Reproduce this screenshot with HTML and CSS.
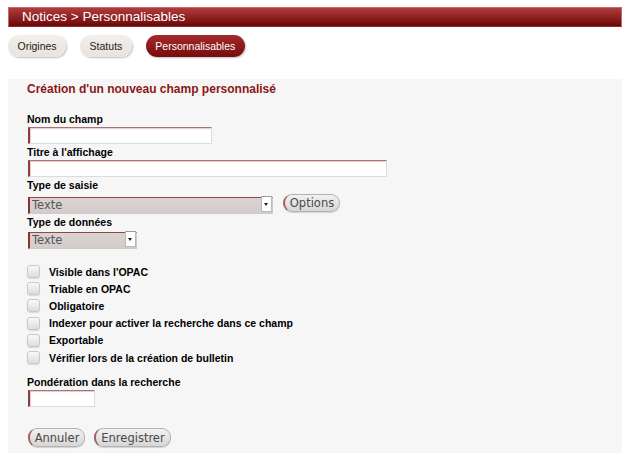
FILE: index.html
```html
<!DOCTYPE html>
<html lang="fr">
<head>
<meta charset="utf-8">
<title>Notices &gt; Personnalisables</title>
<link rel="stylesheet" href="styles.css">
</head>
<body>
<h1 class="hdr">Notices &gt; Personnalisables</h1>
<nav class="tabs">
  <a class="tab">Origines</a>
  <a class="tab">Statuts</a>
  <a class="tab active">Personnalisables</a>
</nav>
<form class="panel">
  <h2 class="title">Création d'un nouveau champ personnalisé</h2>
  <label class="lbl lbl-first">Nom du champ</label>
  <input class="txt w-name" type="text">
  <label class="lbl">Titre à l'affichage</label>
  <input class="txt w-title" type="text">
  <label class="lbl">Type de saisie</label>
  <div class="row">
    <span class="sel w-saisie"><select><option>Texte</option></select><span class="arrow"></span></span>
    <button type="button" class="btn btn-opt">Options</button>
  </div>
  <label class="lbl lbl-donnees">Type de données</label>
  <span class="sel w-donnees"><select><option>Texte</option></select><span class="arrow"></span></span>
  <ul class="checks">
    <li><span class="cb"></span>Visible dans l'OPAC</li>
    <li><span class="cb"></span>Triable en OPAC</li>
    <li><span class="cb"></span>Obligatoire</li>
    <li><span class="cb"></span>Indexer pour activer la recherche dans ce champ</li>
    <li><span class="cb"></span>Exportable</li>
    <li><span class="cb"></span>Vérifier lors de la création de bulletin</li>
  </ul>
  <label class="lbl lbl-pond">Pondération dans la recherche</label>
  <input class="txt w-pond" type="text">
  <div class="actions">
    <button type="button" class="btn">Annuler</button>
    <button type="button" class="btn">Enregistrer</button>
  </div>
</form>
</body>
</html>
```
FILE: styles.css
```css
html, body { margin: 0; padding: 0; background: #fff; }
body {
  padding: 7px 8px 0 8px;
  font-family: "Liberation Sans", Arial, sans-serif;
  color: #000;
}
.hdr {
  margin: 0;
  height: 20px;
  box-sizing: border-box;
  background: linear-gradient(#b13c3c, #6c0808);
  border: 1px solid #c46a6a;
  border-bottom-color: #8a2a2a;
  color: #fff;
  font-size: 13.5px;
  font-weight: normal;
  line-height: 18px;
  padding-left: 13px;
}
.tabs {
  display: flex;
  gap: 14px;
  margin-top: 8px;
  height: 23px;
}
.tab {
  display: block;
  height: 22px;
  line-height: 22px;
  padding: 0 9.5px;
  border-radius: 11px;
  background: linear-gradient(#f3efea, #e9e3dc);
  box-shadow: 1px 1px 2px rgba(0,0,0,0.25);
  font-size: 10.5px;
  color: #222;
}
.tab.active {
  background: linear-gradient(#a52a2a, #760c0c);
  color: #fff;
  padding: 0 9.5px;
}
.panel {
  display: flex;
  flex-direction: column;
  align-items: flex-start;
  margin-top: 21px;
  background: #f6f6f6;
  padding: 3px 0 6px 19px;
  height: 374px;
  box-sizing: border-box;
}
.title {
  margin: 0;
  font-size: 12px;
  line-height: 15px;
  color: #8b1616;
  font-weight: bold;
}
.lbl {
  display: block;
  font-size: 10.5px;
  font-weight: bold;
  line-height: 13px;
  margin-top: 2px;
}
.lbl-first { margin-top: 16px; }
.lbl-donnees { margin-top: 4px; }
.txt {
  margin: 1px 0 0 1px;
  height: 18px;
  box-sizing: border-box;
  background: #fff;
  border: 1px solid #dcdcdc;
  border-top: 1px solid #b07070;
  border-left: 2px solid #8f3c3c;
  box-shadow: inset 1px 1px 1px rgba(140,50,50,0.25);
  padding: 0;
}
.w-name { width: 184px; }
.w-title { width: 359px; }
.w-pond { width: 67px; }
.row {
  display: flex;
  align-items: center;
  gap: 10px;
  margin-top: 2px;
  margin-left: 1px;
}
.sel {
  position: relative;
  display: block;
  height: 17px;
}
.w-donnees { margin: 1px 0 0 1px; }
.sel select {
  -webkit-appearance: none;
  appearance: none;
  width: 100%;
  height: 17px;
  margin: 0;
  box-sizing: border-box;
  border: 1px solid #cfcaca;
  border-top: 1px solid #9a4444;
  border-left: 2px solid #8f3030;
  background: linear-gradient(#d9d3d1, #d2cccb);
  font-family: "DejaVu Sans", Verdana, sans-serif;
  font-size: 11.5px;
  color: #555;
  padding: 0 0 0 2px;
  line-height: 15px;
  border-radius: 0;
}
.w-saisie { width: 245px; }
.w-donnees { width: 109px; }
.arrow {
  position: absolute;
  right: 1px;
  top: 1px;
  width: 9px;
  height: 14px;
  background: #fff;
  border: 1px solid #b9b9b9;
  border-top-color: #999;
}
.arrow::after {
  content: "";
  position: absolute;
  left: 2px;
  top: 6px;
  border-left: 2.5px solid transparent;
  border-right: 2.5px solid transparent;
  border-top: 3px solid #222;
}
.btn {
  height: 19px;
  box-sizing: border-box;
  margin: 0;
  padding: 0 4px 0 4px;
  border-radius: 9px;
  border: 1px solid #b8b0b0;
  border-left: 2px solid #a26060;
  background: linear-gradient(#f2f2f2, #d6d6d6);
  font-family: "DejaVu Sans", Verdana, sans-serif;
  font-size: 11.5px;
  color: #4a4a4a;
  line-height: 16px;
  box-shadow: 0 1px 1px rgba(0,0,0,0.15);
}
.btn-opt { width: 57px; height: 18px; }
.checks {
  list-style: none;
  margin: 16px 0 0 0;
  padding: 0;
}
.checks li {
  display: flex;
  align-items: center;
  height: 17.2px;
  font-size: 10.5px;
  font-weight: bold;
}
.cb {
  width: 11px;
  height: 11px;
  margin-right: 9px;
  border-radius: 3px;
  border: 1px solid #c8c8c8;
  background: linear-gradient(#fafafa, #dcdcdc);
  box-shadow: 0 1px 1px rgba(0,0,0,0.12);
}
.lbl-pond { margin-top: 10px; }
.actions {
  display: flex;
  gap: 9px;
  margin-top: 21px;
  margin-left: 1px;
}
.actions .btn:first-child { width: 57px; }
.actions .btn:last-child { width: 77px; }
```
